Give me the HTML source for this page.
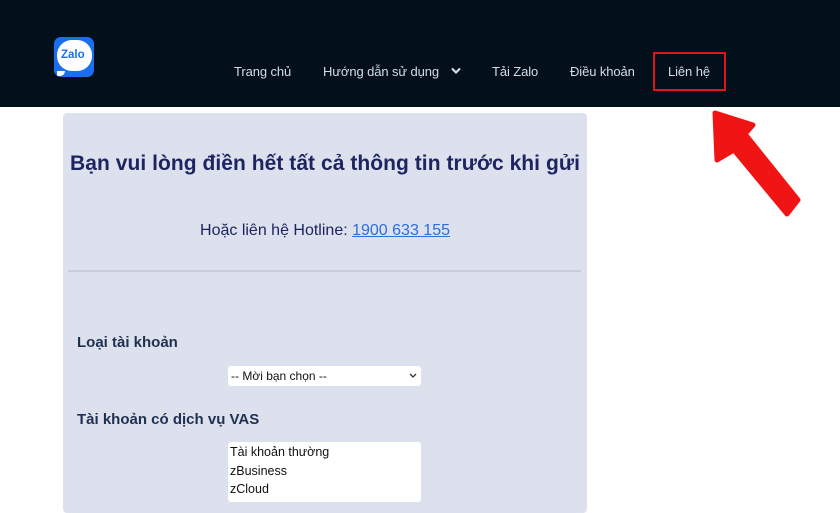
<!DOCTYPE html>
<html><head><meta charset="utf-8"><style>
body{margin:0;width:840px;height:500px;overflow:hidden;background:#fff;font-family:"Liberation Sans",sans-serif;position:relative}
.hdr{position:absolute;left:0;top:0;width:840px;height:107px;background:#03101c}
.nav{position:absolute;top:64px;color:#d6dbe2;font-size:13px;letter-spacing:-0.1px}
.panel{position:absolute;left:63px;top:113px;width:524px;height:400px;background:#dde1ed;border-radius:4px}
.t{position:absolute;color:#1d2561}
</style></head><body>
<div class="hdr">
<div style="position:absolute;left:54px;top:37px;width:40px;height:40px;background:#1a6ff0;border-radius:7px"></div>
<div style="position:absolute;left:57px;top:40px;width:35px;height:31px;background:#fff;border-radius:15px"></div>
<div style="position:absolute;left:57px;top:71px;width:8px;height:5px;background:#fff;border-radius:0 0 6px 2px"></div>
<div style="position:absolute;left:61px;top:49px;font-size:11.5px;font-weight:bold;color:#1a6ff0">Zalo</div>
<div class="nav" style="left:234px">Trang chủ</div>
<div class="nav" style="left:323px">Hướng dẫn sử dụng</div>
<svg style="position:absolute;left:451px;top:67px" width="10" height="8"><path d="M1 1.5L5 5.5L9 1.5" stroke="#d6dbe2" stroke-width="2.2" fill="none"/></svg>
<div class="nav" style="left:492px">Tải Zalo</div>
<div class="nav" style="left:570px">Điều khoản</div>
<div class="nav" style="left:668px">Liên hệ</div>
<div style="position:absolute;left:653px;top:52px;width:73px;height:39px;border:2px solid #e0141a;box-sizing:border-box"></div>
</div>
<svg style="position:absolute;left:0;top:0" width="840" height="500"><polygon points="715,113 753,125 745,134 798,200 787,214 734,150 717,160" fill="#f01414" stroke="#f01414" stroke-width="5" stroke-linejoin="round"/></svg>
<div class="panel"></div>
<div class="t" style="left:63px;width:524px;text-align:center;top:152px;font-size:21px;font-weight:bold;letter-spacing:0.05px">Bạn vui lòng điền hết tất cả thông tin trước khi gửi</div>
<div class="t" style="left:63px;width:524px;text-align:center;top:222px;font-size:16px">Hoặc liên hệ Hotline: <span style="color:#2a6fdc;text-decoration:underline">1900 633 155</span></div>
<div style="position:absolute;left:68px;top:270px;width:513px;height:2px;background:#c9ced9"></div>
<div class="t" style="left:77px;top:334px;font-size:15px;font-weight:bold;color:#1f3050">Loại tài khoản</div>
<div style="position:absolute;left:228px;top:366px;width:193px;height:20px;background:#fff;border-radius:3px;font-size:12px;color:#111;line-height:20px;padding-left:3px;box-sizing:border-box">-- Mời bạn chọn --<svg style="position:absolute;right:4px;top:7px" width="8" height="6"><path d="M1 1L4 4L7 1" stroke="#333" stroke-width="1.3" fill="none"/></svg></div>
<div class="t" style="left:77px;top:411px;font-size:15px;font-weight:bold;color:#1f3050">Tài khoản có dịch vụ VAS</div>
<div style="position:absolute;left:228px;top:442px;width:193px;height:60px;background:#fff;border-radius:3px;font-size:12.5px;color:#111;line-height:18.5px;padding:1px 0 0 2px;box-sizing:border-box">Tài khoản thường<br>zBusiness<br>zCloud</div>
</body></html>
